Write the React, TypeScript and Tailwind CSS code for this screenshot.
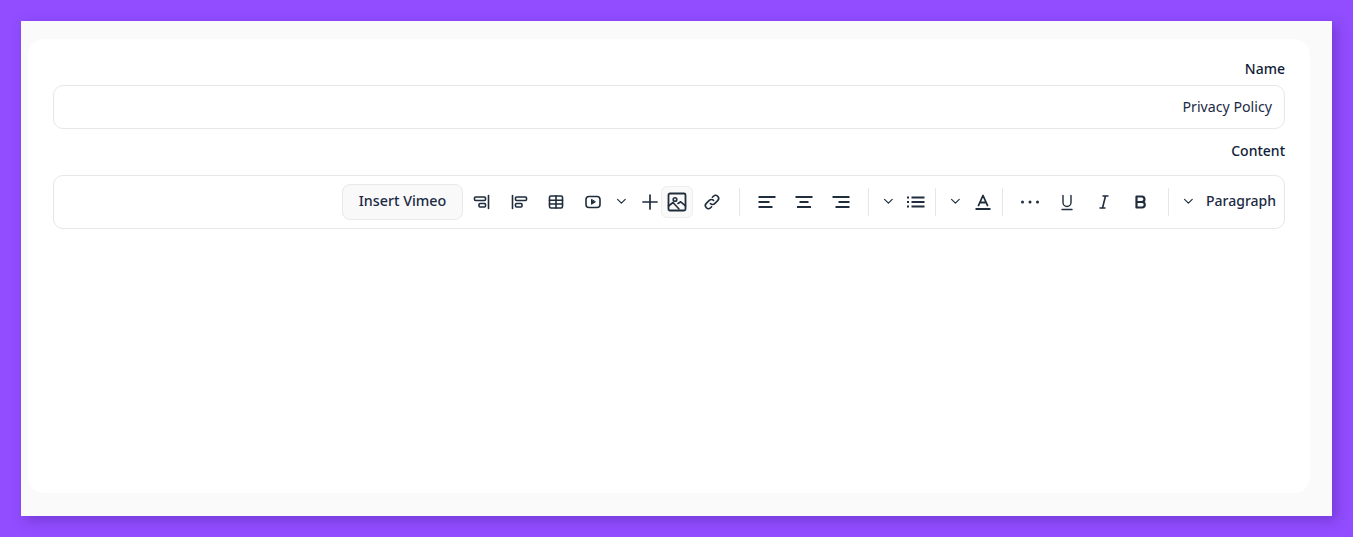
import React from "react";

const S = ({ children, w = 20, className = "" }: { children: React.ReactNode; w?: number; className?: string }) => (
  <svg width={w} height={w} viewBox="0 0 20 20" fill="none" stroke="#1f2d3d" strokeWidth={1.6} strokeLinecap="round" strokeLinejoin="round" className={className}>
    {children}
  </svg>
);

const Cell = ({ w, children, className = "" }: { w: string; children: React.ReactNode; className?: string }) => (
  <div className={`flex h-8 shrink-0 items-center justify-center ${w} ${className}`}>{children}</div>
);

const Chevron = () => (
  <S w={16}>
    <path d="M3.2 6.8 8 11.4 12.8 6.8" strokeWidth={1.5} />
  </S>
);

const Sep = ({ ml = "" }: { ml?: string }) => <div className={`h-7 w-px shrink-0 bg-[#e5e7eb] ${ml}`} />;

export default function App() {
  return (
    <div className="h-[537px] w-full overflow-hidden bg-[#914dff] p-[21px] font-['Noto_Sans',sans-serif] text-[#0f1d38]">
      <div className="h-[495px] w-[1311px] bg-[#fafafa] pb-[23px] pl-[7px] pr-[22px] pt-[18px] shadow-[4px_4px_12px_rgba(60,20,130,0.35)]">
        <div className="flex h-full flex-col rounded-2xl bg-white pl-[25px] pr-[25px] pt-[19px]">
          <label className="mb-[5px] h-[22px] text-right text-[14px] font-medium leading-[22px]">Name</label>
          <div className="flex h-11 items-center justify-end rounded-[10px] border border-[#e5e7eb] bg-white px-3 pb-[1px] text-[14.2px] text-[#1c2a45]">
            Privacy Policy
          </div>
          <label className="mb-[13px] mt-[11px] h-[22px] text-right text-[14px] font-medium leading-[22px]">Content</label>
          <div className="flex h-[54px] items-center justify-end rounded-[10px] border border-[#e5e7eb] bg-white pr-2">
            <button className="h-9 w-[121px] shrink-0 rounded-lg border border-[#e8e8e8] bg-[#f9f9f9] pb-[3px] text-[14.3px] font-medium text-[#1c2a45]">
              Insert Vimeo
            </button>
            <Cell w="w-[37px]">
              <S>
                <path d="M16.5 3.5v13" />
                <rect x="2.5" y="5" width="11" height="3.5" rx="1" />
                <rect x="7" y="11.5" width="6.5" height="3.5" rx="1" />
              </S>
            </Cell>
            <Cell w="w-[37px]">
              <S>
                <path d="M3.5 3.5v13" />
                <rect x="6.5" y="5" width="11" height="3.5" rx="1" />
                <rect x="6.5" y="11.5" width="6.5" height="3.5" rx="1" />
              </S>
            </Cell>
            <Cell w="w-[37px]">
              <S>
                <rect x="3.5" y="4" width="13" height="12" rx="1.5" />
                <path d="M3.5 8.2h13M3.5 12h13M10 4v12" />
              </S>
            </Cell>
            <Cell w="w-[37px]">
              <S>
                <rect x="3" y="4.5" width="14" height="11" rx="3" />
                <path d="M8.5 7.7v4.6l3.6-2.3z" fill="#1f2d3d" strokeWidth={1} />
              </S>
            </Cell>
            <Cell w="w-[22px]" className="ml-[1px] mr-[5px]">
              <Chevron />
            </Cell>
            <Cell w="w-[22px]">
              <S w={20}>
                <path d="M10 3v14M3 10h14" strokeWidth={1.7} />
              </S>
            </Cell>
            <Cell w="w-8" className="rounded-md border border-[#eeeeee] bg-[#f9f9f9]">
              <S>
                <rect x="1.5" y="1.5" width="17" height="17" rx="1.5" strokeWidth={1.8} />
                <circle cx="8" cy="7.5" r="1.8" />
                <path d="M1.5 14 6 10.5 12 17M11 11.5l2.7-1.7 4.8 4" />
              </S>
            </Cell>
            <Cell w="w-[38px]">
              <S>
                <path d="M8.4 11.6a3 3 0 0 0 4.3 0l3-3a3 3 0 0 0-4.3-4.3l-1 1" />
                <path d="M11.6 8.4a3 3 0 0 0-4.3 0l-3 3a3 3 0 0 0 4.3 4.3l1-1" />
              </S>
            </Cell>
            <Sep ml="ml-[8px]" />
            <Cell w="w-[37px]" className="ml-[8px]">
              <S>
                <path d="M1.5 5h17M1.5 10h11M1.5 15h14" strokeWidth={2} strokeLinecap="butt" />
              </S>
            </Cell>
            <Cell w="w-[37px]">
              <S>
                <path d="M1.5 5h17M5.5 10h9M3 15h14" strokeWidth={2} strokeLinecap="butt" />
              </S>
            </Cell>
            <Cell w="w-[37px]">
              <S>
                <path d="M1.5 5h17M7.5 10h11M4.5 15h14" strokeWidth={2} strokeLinecap="butt" />
              </S>
            </Cell>
            <Sep ml="ml-[9px]" />
            <Cell w="w-[19px]" className="ml-[11px]">
              <Chevron />
            </Cell>
            <Cell w="w-[28px]" className="ml-[3px]">
              <S>
                <path d="M5.5 5.5h13M5.5 10h13M5.5 14.5h13" strokeWidth={1.9} strokeLinecap="butt" />
                <path d="M1 5.5h2M1 10h2M1 14.5h2" strokeWidth={2} strokeLinecap="butt" />
              </S>
            </Cell>
            <Sep ml="ml-[5px]" />
            <Cell w="w-[19px]" className="ml-[11px]">
              <Chevron />
            </Cell>
            <Cell w="w-[20px]" className="ml-[7px]">
              <S>
                <path d="M5.5 13.5 10 3.5l4.5 10M7 10.5h6" strokeWidth={1.8} />
                <path d="M2.5 17h15" strokeWidth={2} strokeLinecap="butt" />
              </S>
            </Cell>
            <Sep ml="ml-[9px]" />
            <Cell w="w-[37px]" className="ml-[8px]">
              <S>
                <circle cx="2.5" cy="10" r="1.5" fill="#1f2d3d" stroke="none" />
                <circle cx="10" cy="10" r="1.5" fill="#1f2d3d" stroke="none" />
                <circle cx="17.5" cy="10" r="1.5" fill="#1f2d3d" stroke="none" />
              </S>
            </Cell>
            <Cell w="w-[37px]">
              <S>
                <path d="M6 3.5v7a4 4 0 0 0 8 0v-7" strokeWidth={1.4} />
                <path d="M5 17.5h10" strokeWidth={1.5} />
              </S>
            </Cell>
            <Cell w="w-[37px]">
              <S>
                <path d="M8.5 4h6M5.5 16h6M11.5 4l-3 12" strokeWidth={1.6} strokeLinecap="butt" />
              </S>
            </Cell>
            <Cell w="w-[37px]">
              <S>
                <path d="M5.5 4.5h5.2a2.7 2.7 0 0 1 0 5.5H5.5zM5.5 10h6a2.8 2.8 0 0 1 0 5.5h-6z" strokeWidth={2.2} />
              </S>
            </Cell>
            <Sep ml="ml-[9px]" />
            <Cell w="w-[19px]" className="ml-[11px]">
              <Chevron />
            </Cell>
            <div className="ml-[7px] shrink-0 pb-[3px] text-[14px] font-medium text-[#1c2a45]">Paragraph</div>
          </div>
        </div>
      </div>
    </div>
  );
}
